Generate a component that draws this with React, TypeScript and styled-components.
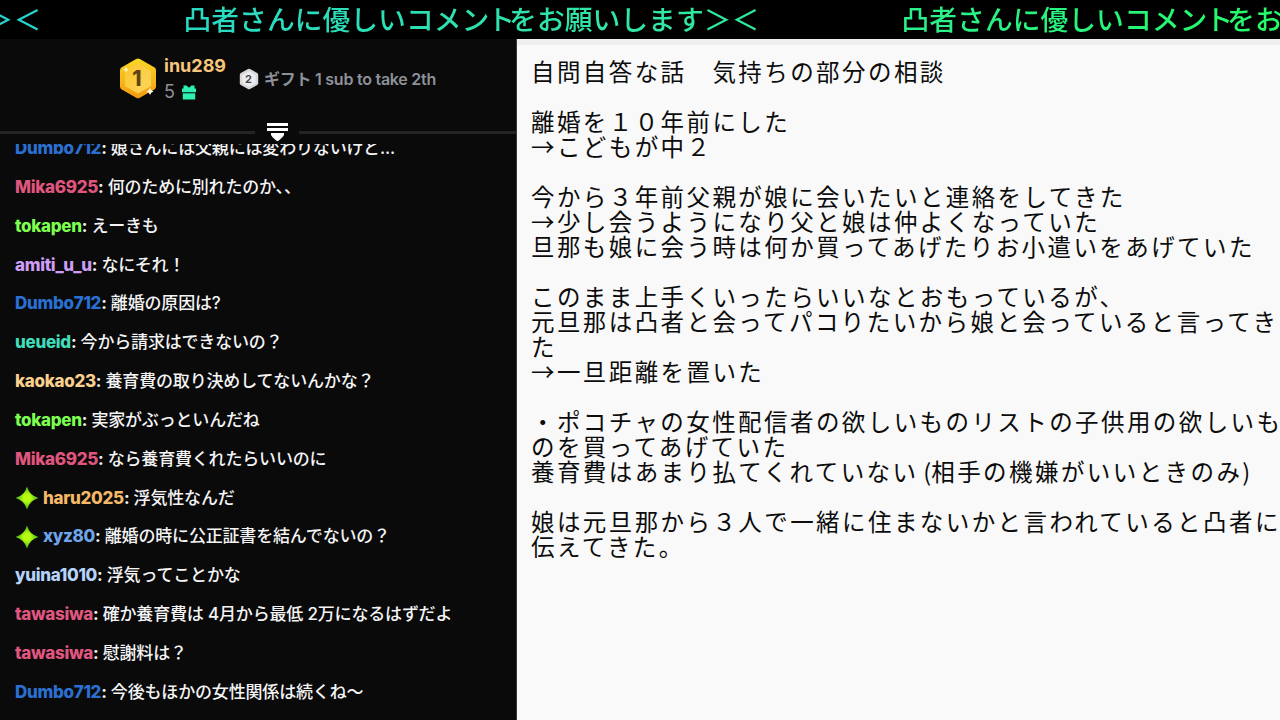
import React from "react";
import styled, { createGlobalStyle } from "styled-components";

const GlobalStyle = createGlobalStyle`
  * { box-sizing: border-box; }
  body { margin: 0; background: #000; overflow: hidden; }
`;

const Screen = styled.div`
  width: 1280px;
  height: 720px;
  display: flex;
  flex-direction: column;
  overflow: hidden;
  background: #000;
`;

const Ticker = styled.header`
  flex: none;
  height: 39px;
  overflow: hidden;
  background: #000;
`;

const TickerTrack = styled.div`
  display: flex;
  width: 2154px;
  margin-left: -534.5px;
  color: transparent;
  background: linear-gradient(90deg, #27d3d0 535px, #30e6a6 1150px, #25fb68 1815px);
  background-clip: text;
  -webkit-background-clip: text;
`;

const TickerItem = styled.div`
  flex: none;
  width: 718px;
  height: 39px;
  font: 500 27.8px/37px "Noto Sans CJK JP", sans-serif;
  white-space: nowrap;
`;

const Tight = styled.span<{ $by: number }>`
  letter-spacing: -${(p) => p.$by}px;
`;

const Body = styled.main`
  flex: 1;
  min-height: 0;
  display: flex;
`;

const ChatPanel = styled.section`
  flex: none;
  width: 517px;
  display: flex;
  flex-direction: column;
  background: #0a0a0b;
  border-right: 1px solid #3a3a3a;
  font-family: Inter, "Noto Sans CJK JP", sans-serif;
`;

const Leaders = styled.div`
  flex: none;
  height: 79px;
  display: flex;
  align-items: center;
  padding-left: 119px;
`;

const LeaderText = styled.div`
  display: flex;
  flex-direction: column;
  margin-left: 7px;
  width: 75px;
  padding-top: 1px;
`;

const LeaderName = styled.div`
  font-size: 18px;
  line-height: 26px;
  font-weight: 650;
  color: #f6c67c;
`;

const GiftCount = styled.div`
  display: flex;
  align-items: center;
  gap: 7px;
  font-size: 18px;
  line-height: 26px;
  color: #8f9096;

  svg {
    margin-top: 1px;
  }
`;

const NextUp = styled.div`
  margin-left: 5px;
  font-size: 16px;
  line-height: 24px;
  font-weight: 600;
  letter-spacing: -0.25px;
  color: #8e9199;
  white-space: nowrap;
`;

const Divider = styled.div`
  flex: none;
  height: 26px;
  display: flex;
  align-items: center;
  padding-top: 2px;
`;

const Rule = styled.div<{ $w: number }>`
  width: ${(p) => p.$w}px;
  height: 3px;
  background: #242427;
`;

const Handle = styled.svg`
  flex: none;
  margin: 0 10px 0 11px;
`;

const ChatList = styled.div`
  flex: 1;
  min-height: 0;
  overflow: hidden;
  display: flex;
  flex-direction: column;
  justify-content: flex-end;
  padding: 0 0 8.3px 15px;
`;

const Row = styled.div`
  flex: none;
  height: 38.85px;
  display: flex;
  align-items: baseline;
  line-height: 38px;
  font-size: 17px;
  white-space: nowrap;
  color: #f4f4f5;
`;

const User = styled.span<{ $c: string }>`
  font-weight: 800;
  color: ${(p) => p.$c};
  letter-spacing: -0.3px;
`;

const Colon = styled.span`
  font-weight: 700;
  margin-right: 4px;
`;

const Message = styled.span`
  font-weight: 500;
  letter-spacing: -0.17px;
`;

const Spark = styled.svg`
  align-self: center;
  margin-right: 4px;
`;

const Notes = styled.section`
  flex: 1;
  min-width: 0;
  border-top: 6px solid #efeff0;
  background: #f9f9f9;
  padding: 14px 0 0 14px;
`;

const NoteLine = styled.div`
  height: 25.03px;
  font: 400 23.5px/25px "Noto Sans CJK JP", sans-serif;
  letter-spacing: 2.42px;
  color: #0c0c0c;
  white-space: nowrap;
`;

const HalfWidth = styled.span<{ $side: "left" | "right" }>`
  display: inline-block;
  width: 12.9px;
  text-align: ${(p) => p.$side};
  letter-spacing: 0;
`;

const messages = [
  { name: "Dumbo712", color: "#2a70d2", text: "娘さんには父親には変わりないけど..." },
  { name: "Mika6925", color: "#e0567f", text: "何のために別れたのか、、" },
  { name: "tokapen", color: "#7dff4f", text: "えーきも" },
  { name: "amiti_u_u", color: "#cf9df5", text: "なにそれ！" },
  { name: "Dumbo712", color: "#2a70d2", text: "離婚の原因は?" },
  { name: "ueueid", color: "#41dcb9", text: "今から請求はできないの？" },
  { name: "kaokao23", color: "#fad08f", text: "養育費の取り決めしてないんかな？" },
  { name: "tokapen", color: "#7dff4f", text: "実家がぶっといんだね" },
  { name: "Mika6925", color: "#e0567f", text: "なら養育費くれたらいいのに" },
  { name: "haru2025", color: "#f5b967", text: "浮気性なんだ", spark: true },
  { name: "xyz80", color: "#6ea4ea", text: "離婚の時に公正証書を結んでないの？", spark: true },
  { name: "yuina1010", color: "#b5d3fb", text: "浮気ってことかな" },
  { name: "tawasiwa", color: "#e0567f", text: "確か養育費は 4月から最低 2万になるはずだよ" },
  { name: "tawasiwa", color: "#e0567f", text: "慰謝料は？" },
  { name: "Dumbo712", color: "#2a70d2", text: "今後もほかの女性関係は続くね〜" },
];

const notes = [
  "自問自答な話　気持ちの部分の相談",
  "",
  "離婚を１０年前にした",
  "→こどもが中２",
  "",
  "今から３年前父親が娘に会いたいと連絡をしてきた",
  "→少し会うようになり父と娘は仲よくなっていた",
  "旦那も娘に会う時は何か買ってあげたりお小遣いをあげていた",
  "",
  "このまま上手くいったらいいなとおもっているが、",
  "元旦那は凸者と会ってパコりたいから娘と会っていると言ってき",
  "た",
  "→一旦距離を置いた",
  "",
  "・ポコチャの女性配信者の欲しいものリストの子供用の欲しいも",
  "のを買ってあげていた",
  "養育費はあまり払てくれていない(相手の機嫌がいいときのみ)",
  "",
  "娘は元旦那から３人で一緒に住まないかと言われていると凸者に",
  "伝えてきた。",
];

const renderNote = (line: string) =>
  line.split(/([()])/).map((part, i) =>
    part === "(" || part === ")" ? (
      <HalfWidth key={i} $side={part === "(" ? "right" : "left"}>{part}</HalfWidth>
    ) : (
      part
    )
  );

const GoldBadge = () => (
  <svg width="38" height="42" viewBox="0 0 38 42">
    <defs>
      <linearGradient id="rim" x1="0" y1="0" x2="0" y2="1">
        <stop offset="0" stopColor="#f9d923" />
        <stop offset="1" stopColor="#f39a13" />
      </linearGradient>
      <linearGradient id="face" x1="0" y1="0" x2="1" y2="1">
        <stop offset="0" stopColor="#fbc52c" />
        <stop offset="1" stopColor="#ffd55e" />
      </linearGradient>
    </defs>
    <path d="M17.2 1Q19 0 20.8 1L35.2 9.2Q37 10.300 37 12.400V28.400Q37 30.500 35.2 31.600L20.8 39.800Q19 40.800 17.2 39.800L2.8 31.600Q1 30.500 1 28.400V12.400Q1 10.300 2.8 9.2Z" fill="url(#rim)" />
    <path d="M19 5.500L32 12.900V28.100L19 35.500L6 28.100V12.900Z" fill="url(#face)" />
    <text x="17.800" y="27.600" textAnchor="middle" fontFamily="Inter, sans-serif" fontWeight="800" fontSize="21" fill="#60440f">1</text>
    <path d="M7 8.500Q7.5 11 10 11.500Q7.5 12 7 14.500Q6.500 12 4 11.500Q6.500 11 7 8.500Z" fill="#fff3b8" />
    <path d="M31 30Q31.700 32.800 34.500 33.500Q31.700 34.200 31 37Q30.300 34.200 27.500 33.500Q30.300 32.800 31 30Z" fill="#fff8df" />
  </svg>
);

const SilverBadge = () => (
  <svg width="20" height="22" viewBox="0 0 20 22">
    <path d="M9 .9Q10 .4 11 .9L18.200 5Q19.200 5.600 19.200 6.700V15.300Q19.200 16.400 18.200 17L11 21.100Q10 21.600 9 21.100L1.800 17Q.8 16.400 .8 15.300V6.700Q.8 5.600 1.800 5Z" fill="#d9d9dc" />
    <path d="M10 3.200L16.600 7V15L10 18.800L3.400 15V7Z" fill="#ececee" />
    <text x="9.500" y="14.800" textAnchor="middle" fontFamily="Inter, sans-serif" fontWeight="700" fontSize="11" fill="#48484c">2</text>
  </svg>
);

const Gift = () => (
  <svg width="14" height="15" viewBox="0 0 14 15" fill="#2df0b2">
    <path d="M1.500 0.500H4.500L7 2.800L9.500 0.500H12.500V3.500H14V7.300H0V3.500H1.500Z" />
    <path d="M0.800 8.300H13.200V14.500H0.800Z" />
  </svg>
);

export default function App() {
  return (
    <Screen>
      <GlobalStyle />
      <Ticker>
        <TickerTrack>
          {[0, 1, 2].map((i) => (
            <TickerItem key={i}>
              凸者さんに優しいコメ<Tight $by={2}>ン</Tight>
              <Tight $by={6}>ト</Tight>をお願いします＞＜
            </TickerItem>
          ))}
        </TickerTrack>
      </Ticker>
      <Body>
        <ChatPanel>
          <Leaders>
            <GoldBadge />
            <LeaderText>
              <LeaderName>inu289</LeaderName>
              <GiftCount>
                5 <Gift />
              </GiftCount>
            </LeaderText>
            <SilverBadge />
            <NextUp>ギフト 1 sub to take 2th</NextUp>
          </Leaders>
          <Divider>
            <Rule $w={255} />
            <Handle width="23" height="20" viewBox="0 0 23 20" fill="#fff">
              <path d="M1 1H22V4H1ZM1 6H22V9H1ZM5 11H18V13Q17 15 14.500 17L12.500 18.700Q11.500 19.500 10.500 18.700L8.500 17Q6 15 5 13Z" />
            </Handle>
            <Rule $w={217} />
          </Divider>
          <ChatList>
            {messages.map((m, i) => (
              <Row key={i}>
                {m.spark && (
                  <Spark width="24" height="24" viewBox="0 0 24 24">
                    <defs>
                      <radialGradient id="glow">
                        <stop offset="0.300" stopColor="#b6fb12" />
                        <stop offset="1" stopColor="#3fae1c" />
                      </radialGradient>
                    </defs>
                    <path d="M12 0.500Q14.500 9.500 23.500 12Q14.500 14.500 12 23.500Q9.500 14.500 0.500 12Q9.500 9.500 12 0.500Z" fill="url(#glow)" />
                  </Spark>
                )}
                <User $c={m.color}>{m.name}</User>
                <Colon>:</Colon>
                <Message>{m.text}</Message>
              </Row>
            ))}
          </ChatList>
        </ChatPanel>
        <Notes>
          {notes.map((line, i) => (
            <NoteLine key={i}>{renderNote(line)}</NoteLine>
          ))}
        </Notes>
      </Body>
    </Screen>
  );
}
